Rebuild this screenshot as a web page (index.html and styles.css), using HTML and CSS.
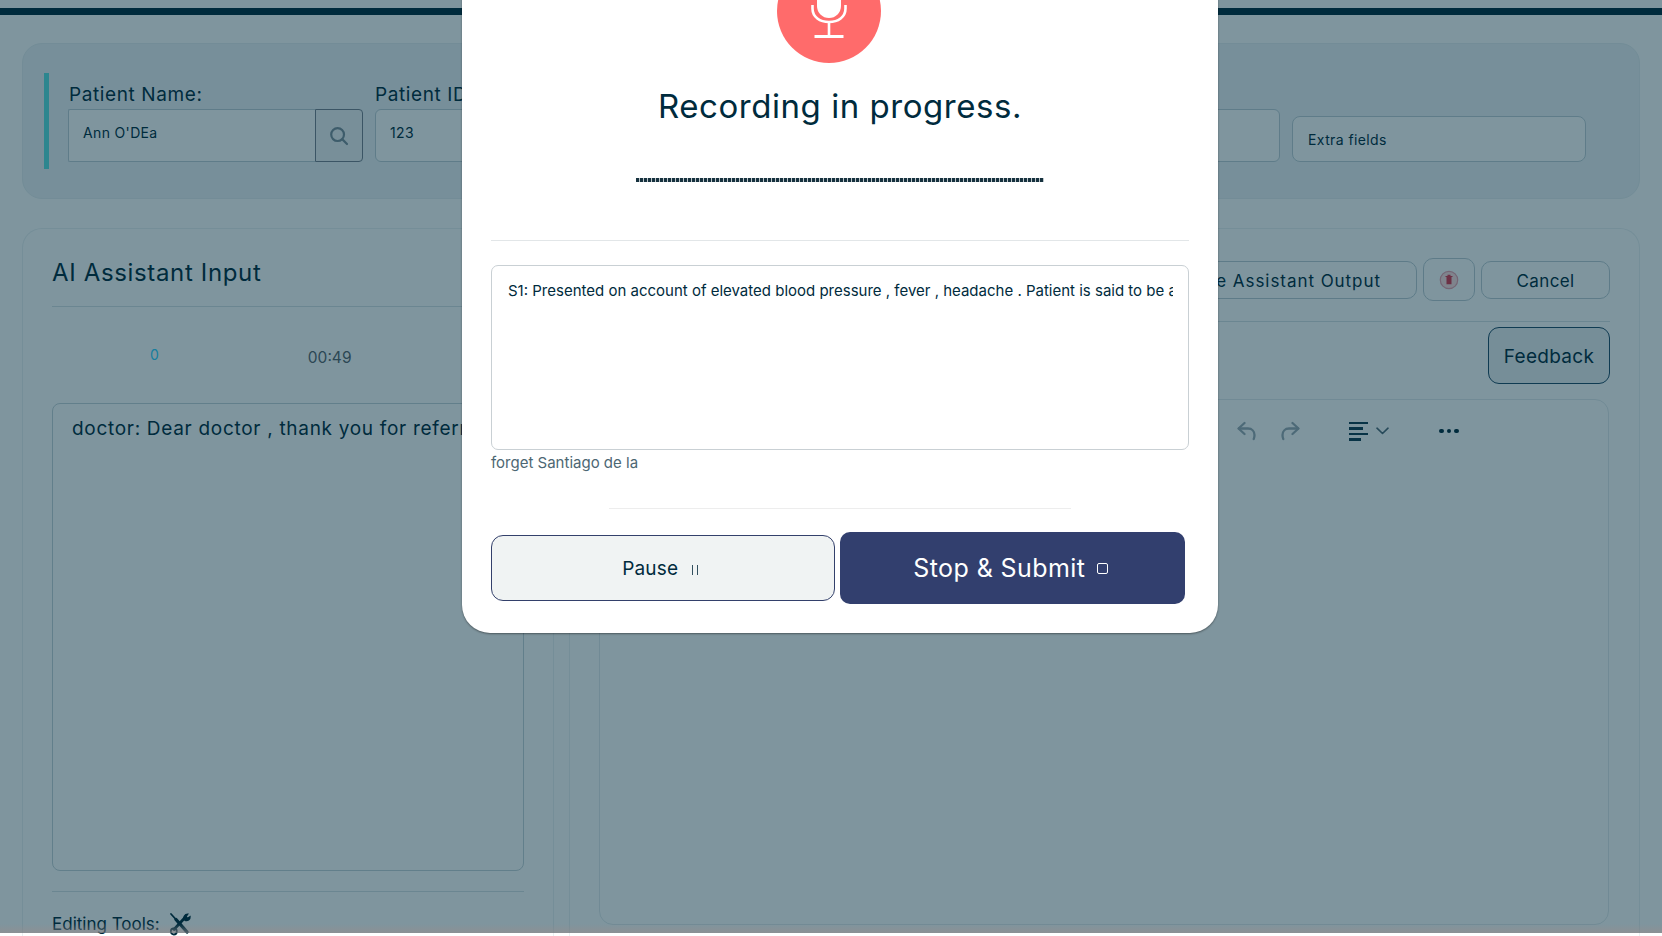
FILE: index.html
```html
<!DOCTYPE html>
<html lang="en">
<head>
  <meta charset="UTF-8">
  <title>AI Assistant</title>
  <link rel="stylesheet" href="styles.css">
</head>
<body>
  <div class="topbar"></div>
  <div class="page">
    <div class="patient-card">
      <div class="accent"></div>
      <div class="field field-name">
        <label class="field-label">Patient Name:</label>
        <div class="search-group">
          <div class="input input-left">Ann O'DEa</div>
          <button class="search-btn">
            <svg width="20" height="20" viewBox="0 0 20 20" fill="none" stroke="#7b8d98" stroke-width="2.2" stroke-linecap="round">
              <circle cx="8.6" cy="8.6" r="6.4"/>
              <path d="M13.4 13.4 18 18"/>
            </svg>
          </button>
        </div>
      </div>
      <div class="field field-id">
        <label class="field-label">Patient ID:</label>
        <div class="input">123</div>
      </div>
      <div class="extra-fields">Extra fields</div>
    </div>

    <div class="columns">
      <div class="panel panel-input">
        <h2 class="panel-title">AI Assistant Input</h2>
        <div class="status-row">
          <span class="status-count">0</span>
          <span class="status-time">00:49</span>
        </div>
        <div class="transcript">doctor: Dear doctor , thank you for referring</div>
        <div class="tools-row">
          <span>Editing Tools:</span>
          <svg class="tools-icon" width="22" height="24" viewBox="0 0 22 24" fill="none" stroke="#002b3d" stroke-linecap="round">
            <path d="M2 2 7 7.5" stroke-width="1.8"/>
            <path d="M7 7.5 18 20" stroke-width="3.4"/>
            <path d="M16.5 5 5 17.5" stroke-width="2.8"/>
            <path d="M15 7.5c-1-2.5.8-5 3.6-5.2l-1.6 2.4 1.6 1.6 2.4-1.6c.2 2.8-2.3 4.6-5 3.6" stroke-width="1.4" fill="#002b3d"/>
            <circle cx="4.8" cy="19.5" r="3" stroke-width="1.8"/>
          </svg>
        </div>
      </div>

      <div class="panel panel-output">
        <div class="output-actions">
          <button class="action-btn action-save">Save Assistant Output</button>
          <button class="trash-btn">
            <svg width="20" height="20" viewBox="0 0 20 20">
              <circle cx="10" cy="10" r="8.7" fill="#ffdcdc" stroke="#e8a0ac" stroke-width="1.2"/>
              <path d="M6.5 6h7v1h-1v7.2h-5V7h-1zM8.5 4.8h3V6h-3z" fill="#d8364c"/>
            </svg>
          </button>
          <button class="action-btn action-cancel">Cancel</button>
        </div>
        <div class="feedback-row">
          <button class="feedback-btn">Feedback</button>
        </div>
        <div class="output-box">
          <div class="toolbar">
            <svg width="20" height="20" viewBox="0 0 20 20" fill="none" stroke="#9aa8b2" stroke-width="2.3" stroke-linecap="round" stroke-linejoin="round">
              <path d="M7.5 2 1.5 7.5l6 5.5"/>
              <path d="M2 7.5h9c4 0 6.5 3 6.5 6.5 0 1.5-.3 3-.8 4"/>
            </svg>
            <svg class="tool-redo" width="20" height="20" viewBox="0 0 20 20" fill="none" stroke="#9aa8b2" stroke-width="2.3" stroke-linecap="round" stroke-linejoin="round">
              <path d="M12.5 2l6 5.5-6 5.5"/>
              <path d="M18 7.5H9c-4 0-6.5 3-6.5 6.5 0 1.5.3 3 .8 4"/>
            </svg>
            <div class="tool-align">
              <span class="align-line"></span>
              <span class="align-line align-short"></span>
              <span class="align-line"></span>
              <span class="align-line align-shorter"></span>
            </div>
            <svg class="tool-chevron" width="13" height="8" viewBox="0 0 13 8" fill="none" stroke="#4f6876" stroke-width="1.6" stroke-linecap="round" stroke-linejoin="round">
              <path d="M1 1.2 6.5 6.5 12 1.2"/>
            </svg>
            <div class="tool-dots">
              <span></span><span></span><span></span>
            </div>
          </div>
        </div>
      </div>
    </div>
  </div>

  <div class="overlay">
    <div class="modal">
      <div class="mic-circle">
        <svg width="36" height="41" viewBox="0 0 36 41" fill="none" stroke="#fff" stroke-width="2.6">
          <rect x="6" y="-14" width="24" height="34" rx="12" fill="#fff" stroke="none"/>
          <path d="M1.5 7v3.5c0 8.500 7.400 13.500 16.500 13.500s16.500-5 16.500-13.500V7"/>
          <path d="M18 24v14"/>
          <path d="M3.5 38.500h29" stroke-width="3"/>
        </svg>
      </div>
      <h1 class="modal-title">Recording in progress.</h1>
      <div class="wave"></div>
      <hr class="modal-divider">
      <div class="live-text">
        <div class="live-line">S1: Presented on account of elevated blood pressure , fever , headache . Patient is said to be a</div>
      </div>
      <div class="interim">forget Santiago de la</div>
      <hr class="modal-divider-short">
      <div class="modal-actions">
        <button class="pause-btn">Pause <span class="pause-icon"></span></button>
        <button class="stop-btn">Stop &amp; Submit <span class="stop-icon"></span></button>
      </div>
    </div>
  </div>
</body>
</html>
```

FILE: styles.css
```css
* {
  box-sizing: border-box;
}
html, body {
  margin: 0;
  height: 936px;
  overflow: hidden;
}
body {
  font-family: Inter, 'Open Sans', Arial, sans-serif;
  background: #fff;
  color: #002b3d;
  position: relative;
  padding-top: 8px;
}
button {
  font-family: inherit;
  cursor: pointer;
}
.topbar {
  height: 7px;
  background: #002b3d;
}
.page {
  padding: 28px 22px 0;
}
.patient-card {
  display: flex;
  align-items: flex-end;
  gap: 12px;
  height: 156px;
  padding: 29px 53px 29px 21px;
  background: #eef3f6;
  border: 1px solid #e6edf0;
  border-radius: 20px;
}
.accent {
  width: 5px;
  align-self: stretch;
  background: #5be0e0;
  margin-right: 7px;
}
.field {
  display: flex;
  flex-direction: column;
  padding-bottom: 7px;
}
.field-name {
  width: 295px;
}
.field-id {
  flex: 1;
}
.field-label {
  font-size: 19px;
  line-height: 26px;
  letter-spacing: .6px;
  margin: 0 0 1px 1px;
}
.field-id .field-label {
  margin-left: 0;
}
.input {
  height: 53px;
  padding: 13px 14px 0;
  font-size: 14px;
  line-height: 20px;
  letter-spacing: .35px;
  background: #fff;
  border: 1px solid #becdd5;
  border-radius: 6px;
}
.search-group {
  display: flex;
}
.input-left {
  flex: 1;
  border-radius: 2px 0 0 2px;
  border-right: none;
}
.search-btn {
  width: 48px;
  height: 53px;
  display: flex;
  align-items: center;
  justify-content: center;
  padding: 0;
  background: #f1f3f5;
  border: 1px solid #767f8d;
  border-radius: 0 4px 4px 0;
}
.extra-fields {
  width: 294px;
  height: 46px;
  margin-bottom: 7px;
  padding: 13px 15px 0;
  font-size: 14px;
  line-height: 20px;
  letter-spacing: .4px;
  background: #fff;
  border: 1px solid #becdd5;
  border-radius: 8px;
}
.columns {
  display: flex;
  gap: 15px;
  margin-top: 29px;
}
.panel {
  height: 708px;
  background: #fff;
  border: 1px solid #eaf0f2;
  border-bottom: none;
  border-radius: 20px 20px 0 0;
  padding: 29px 29px 0;
}
.panel-input {
  width: 532px;
}
.panel-output {
  flex: 1;
}
.panel-title {
  margin: 0;
  height: 49px;
  font-size: 24px;
  line-height: 30px;
  font-weight: 400;
  letter-spacing: .65px;
  border-bottom: 1px solid #d7e0e4;
}
.status-row {
  display: flex;
  height: 96px;
  font-size: 14px;
}
.status-count {
  margin: 33px 0 0 98px;
  line-height: 30px;
  height: 30px;
  color: #2fd0ff;
}
.status-time {
  margin: 41px 0 0 149px;
  font-size: 15.5px;
  line-height: 20px;
  height: 20px;
  color: #58636b;
}
.transcript {
  height: 468px;
  padding: 12px 19px;
  font-size: 19px;
  line-height: 26px;
  letter-spacing: .7px;
  white-space: nowrap;
  overflow: hidden;
  border: 1px solid #c5d2d8;
  border-radius: 8px;
}
.tools-row {
  display: flex;
  align-items: center;
  gap: 9px;
  margin-top: 20px;
  padding-top: 20px;
  border-top: 1px solid #d7e0e4;
  font-size: 17px;
  line-height: 24px;
}
.tools-icon {
  flex: none;
}
.output-actions {
  display: flex;
  align-items: center;
  justify-content: flex-end;
  gap: 6px;
  height: 64px;
  padding-bottom: 20px;
  border-bottom: 1px solid #d7e0e4;
}
.action-btn {
  height: 38px;
  padding-top: 3px;
  font-size: 17px;
  color: #002b3d;
  background: #fff;
  border: 1px solid #bccbd3;
  border-radius: 10px;
}
.action-save {
  width: 330px;
  padding-right: 35px;
  letter-spacing: .95px;
  text-align: right;
}
.action-cancel {
  width: 129px;
  letter-spacing: .4px;
}
.trash-btn {
  width: 52px;
  height: 43px;
  padding: 0;
  display: flex;
  align-items: center;
  justify-content: center;
  background: #fff;
  border: 1px solid #bccbd3;
  border-radius: 10px;
}
.feedback-row {
  display: flex;
  justify-content: flex-end;
  padding-top: 5px;
}
.feedback-btn {
  width: 122px;
  height: 57px;
  padding-top: 3px;
  font-size: 19px;
  letter-spacing: .3px;
  color: #002b3d;
  background: #ecf0f2;
  border: 1px solid #1f4a66;
  border-radius: 11px;
}
.output-box {
  width: 1010px;
  height: 526px;
  margin-top: 15px;
  border: 1px solid #e2e9ec;
  border-radius: 14px;
}
.toolbar {
  display: flex;
  align-items: center;
  height: 20px;
  margin-top: 21px;
  padding-left: 637px;
}
.tool-redo {
  margin-left: 23px;
}
.tool-align {
  display: flex;
  flex-direction: column;
  gap: 3px;
  width: 19px;
  margin-left: 49px;
}
.align-line {
  display: block;
  height: 2.5px;
  background: #103a4e;
}
.align-short {
  width: 14px;
}
.align-shorter {
  width: 12px;
}
.tool-chevron {
  margin-left: 8px;
}
.tool-dots {
  display: flex;
  gap: 3px;
  margin-left: 50px;
}
.tool-dots span {
  width: 4.5px;
  height: 4.5px;
  border-radius: 50%;
  background: #002b3d;
}
.overlay {
  position: absolute;
  top: 0;
  left: 0;
  width: 100%;
  height: 933px;
  background: rgba(0, 43, 61, .5);
  overflow: hidden;
}
.overlay::after {
  content: "";
  position: absolute;
  left: 0;
  right: 0;
  bottom: 0;
  height: 9px;
  background: linear-gradient(rgba(150, 140, 140, 0), rgba(150, 140, 140, .55));
}
.modal {
  width: 756px;
  height: 674px;
  margin: -41px 0 0 462px;
  padding: 0 29px;
  background: #fff;
  border-radius: 0 0 28px 28px;
  box-shadow: 0 1px 2px rgba(0, 0, 0, .4);
  position: relative;
  z-index: 1;
}
.mic-circle {
  width: 104px;
  height: 104px;
  margin-left: 286px;
  border-radius: 50%;
  background: #ff6b6b;
  display: flex;
  align-items: flex-end;
  justify-content: center;
  padding-bottom: 24px;
  overflow: hidden;
}
.modal-title {
  margin: 21px 0 0;
  font-size: 33px;
  line-height: 44px;
  font-weight: 400;
  letter-spacing: .55px;
  text-align: center;
}
.wave {
  width: 408px;
  height: 4px;
  margin: 50px auto 0;
  background: repeating-linear-gradient(90deg, #17323f 0 3px, #c0c8cc 3px 4px);
}
.modal-divider {
  margin: 58px 0 0;
  border: none;
  border-top: 1px solid #e2e6e8;
}
.live-text {
  height: 185px;
  margin-top: 24px;
  padding: 15px 15px 0 16px;
  border: 1px solid #c9d0d4;
  border-radius: 7px;
}
.live-line {
  font-size: 15px;
  line-height: 20px;
  white-space: nowrap;
  overflow: hidden;
}
.interim {
  margin-top: 3px;
  font-size: 15px;
  line-height: 20px;
  color: #4d6773;
}
.modal-divider-short {
  width: 462px;
  margin: 35px auto 0;
  border: none;
  border-top: 1.5px solid #ededed;
}
.modal-actions {
  display: flex;
  align-items: center;
  gap: 5px;
  margin-top: 23px;
}
.pause-btn {
  width: 344px;
  height: 66px;
  padding-right: 12px;
  font-size: 19px;
  letter-spacing: .2px;
  color: #002b3d;
  background: #f0f3f3;
  border: 1px solid #33406b;
  border-radius: 12px;
}
.pause-icon {
  display: inline-block;
  width: 6px;
  height: 10px;
  margin-left: 8px;
  border-left: 1.5px solid #33505f;
  border-right: 1.5px solid #33505f;
}
.stop-btn {
  width: 345px;
  height: 72px;
  padding-right: 10px;
  font-size: 25px;
  letter-spacing: .4px;
  color: #fff;
  background: #323f6e;
  border: none;
  border-radius: 10px;
}
.stop-icon {
  display: inline-block;
  width: 11px;
  height: 11px;
  margin-left: 4px;
  vertical-align: 3px;
  border: 1.5px solid #fff;
  border-radius: 2px;
}
```
